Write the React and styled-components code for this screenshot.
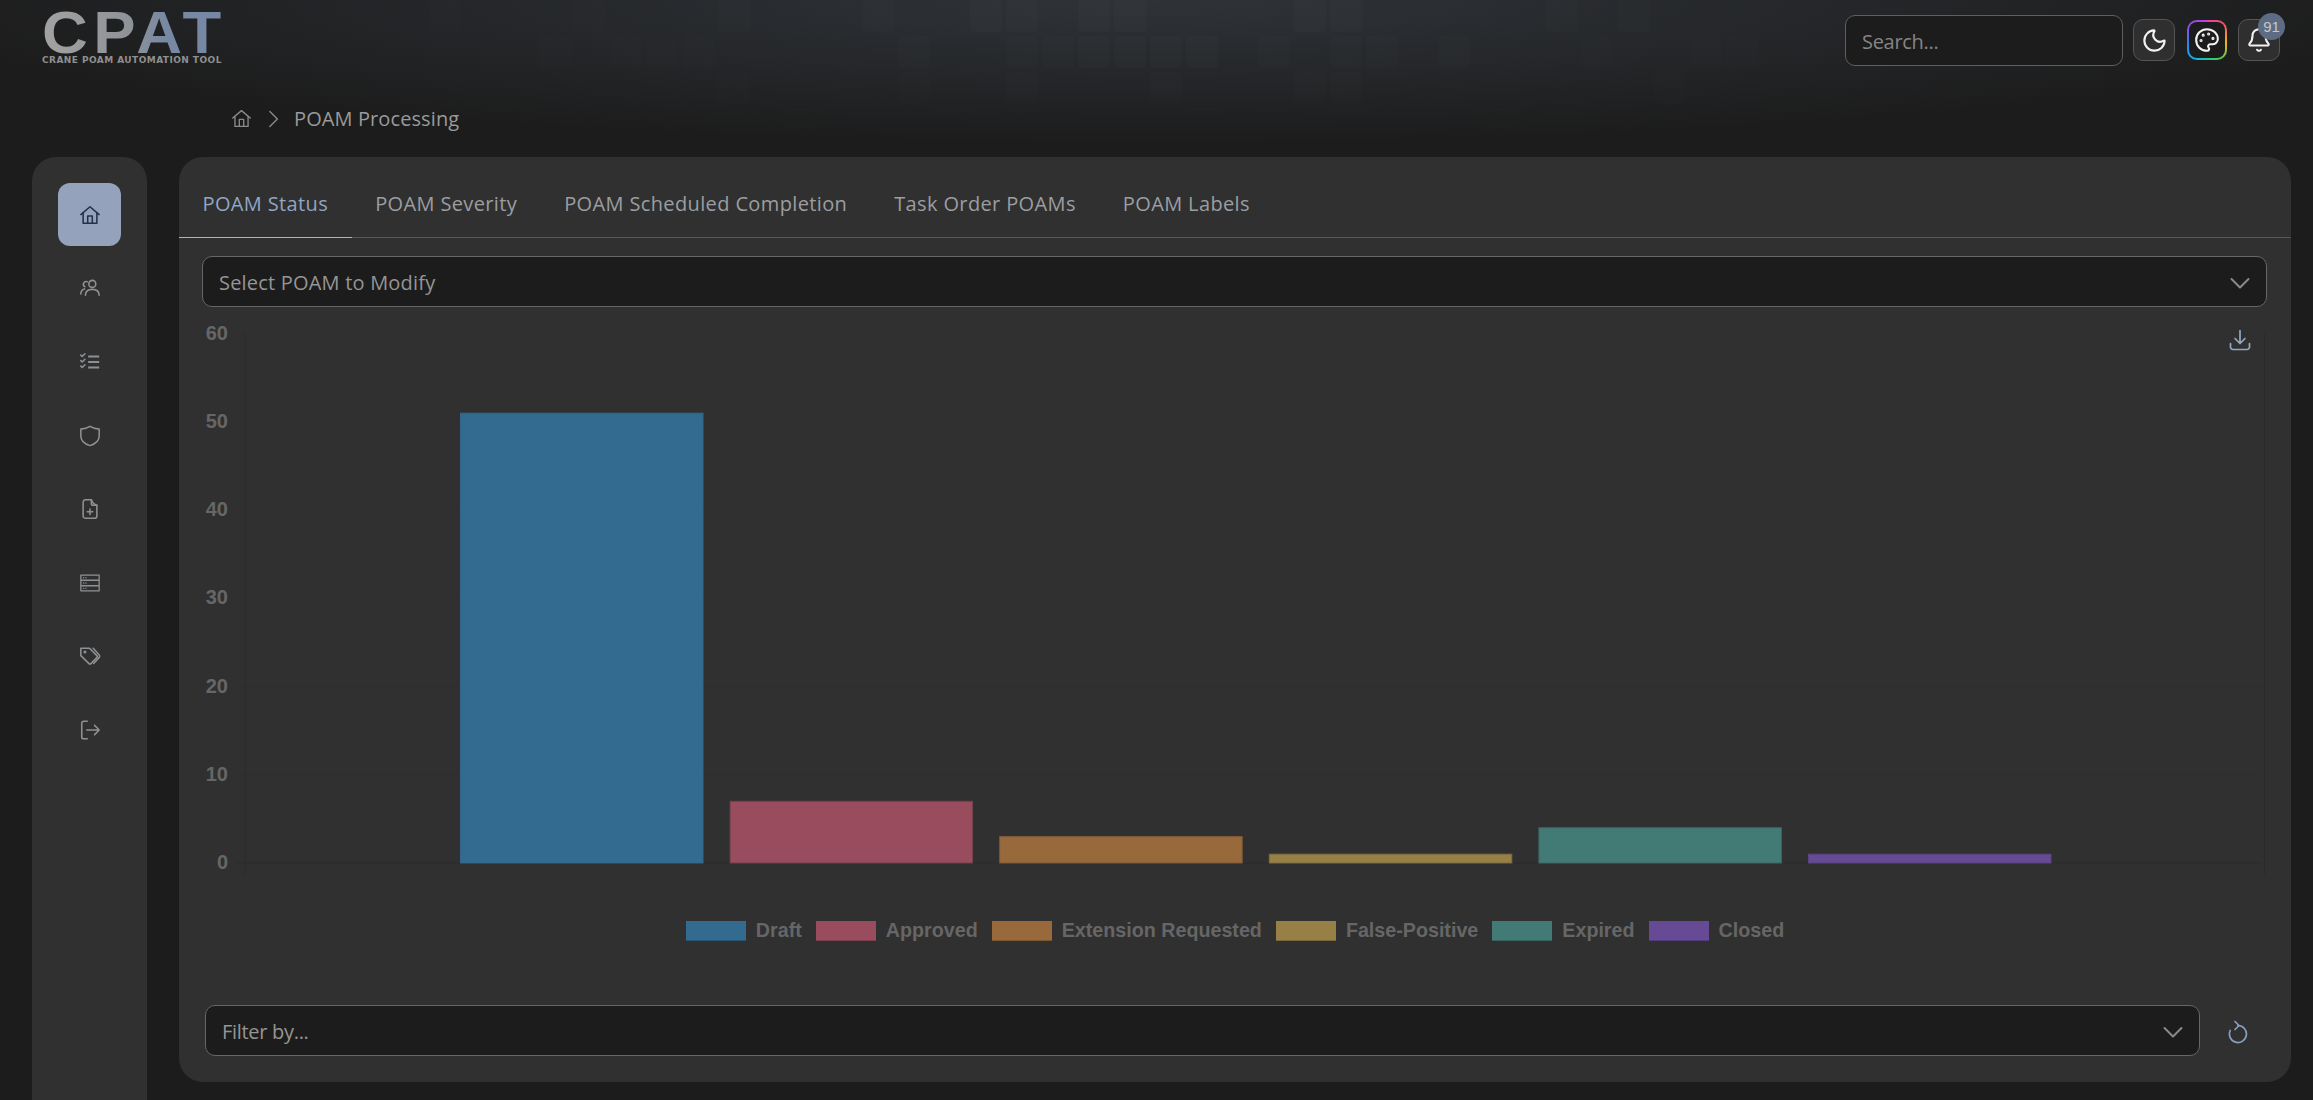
import React from "react";
import styled, { createGlobalStyle } from "styled-components";
import { Moon, Palette, Bell } from "lucide-react";

const Global = createGlobalStyle`
  html, body {
    margin: 0;
    background: #1c1c1c;
    font-family: "Open Sans", "Noto Sans", sans-serif;
  }
  * { box-sizing: border-box; }
`;

const Page = styled.div`
  position: relative;
  width: 2313px;
  height: 1100px;
  overflow: hidden;
  background: radial-gradient(ellipse 1300px 145px at 1150px 0, #2f3338 0%, #25272a 50%, #1c1c1c 100%), #1c1c1c;
`;

const Backdrop = styled.div`
  position: absolute;
  top: 0;
  left: -2px;
  display: grid;
  grid-template-columns: repeat(65, 32px);
  grid-auto-rows: 32px;
  gap: 4px;
  mask-image: linear-gradient(to bottom, #000 40%, rgba(0, 0, 0, 0.35) 100%);
`;

const Cell = styled.div`
  border-radius: 3px;
  background: #ffffff;
`;

const Content = styled.div`
  position: relative;
  z-index: 1;
`;

const Header = styled.header`
  display: flex;
  align-items: center;
  justify-content: space-between;
  height: 80px;
  padding: 0 33px 0 42px;
`;

const Logo = styled.div`
  display: flex;
  flex-direction: column;
  width: 180px;
  margin-top: -5px;
`;

const LogoWord = styled.div`
  font-family: "Liberation Sans", sans-serif;
  font-weight: 700;
  font-size: 59px;
  line-height: 45px;
  height: 45px;
  letter-spacing: 5px;
  white-space: nowrap;
  transform: scaleX(1.075);
  transform-origin: left center;
  color: transparent;
  background: linear-gradient(90deg, #a2a2a2 0%, #8f9298 45%, #7688a3 65%, #7688a3 100%);
  background-clip: text;
  -webkit-background-clip: text;
`;

const LogoTag = styled.div`
  font-family: "DejaVu Sans", sans-serif;
  font-weight: 700;
  font-size: 9px;
  line-height: 9px;
  letter-spacing: 0.44px;
  white-space: nowrap;
  color: #8f8f8f;
`;

const Actions = styled.div`
  display: flex;
  align-items: center;
`;

const SearchBox = styled.input`
  width: 278px;
  height: 51px;
  padding: 2px 16px 0;
  margin-right: 10px;
  font: 400 20px "Open Sans", sans-serif;
  letter-spacing: -0.3px;
  color: #ccc;
  background: #1c1c1c;
  border: 1px solid #5f5f5f;
  border-radius: 10px;
  outline: none;
  &::placeholder { color: #858585; opacity: 1; }
`;

const IconButton = styled.button`
  position: relative;
  display: flex;
  align-items: center;
  justify-content: center;
  width: 42px;
  height: 42px;
  padding: 0;
  color: #f2f2f2;
  background: #2f2f2f;
  border: 1px solid #555;
  border-radius: 10px;
`;

const ThemeButton = styled(IconButton)`
  width: 40px;
  height: 40px;
  margin: 0 11px 0 12px;
  border: 2px solid transparent;
  background:
    linear-gradient(#1c1c1c, #1c1c1c) padding-box,
    conic-gradient(from 0deg, #e83fa8, #f0506a 12%, #f2b21e 27%, #38d05c 42%, #18b0f0 60%, #2f7ff0 72%, #8a4fe8 85%, #c040e0 100%) border-box;
`;

const Badge = styled.span`
  position: absolute;
  top: -7px;
  right: -6px;
  width: 27px;
  height: 27px;
  border-radius: 50%;
  font-size: 15px;
  line-height: 27px;
  text-align: center;
  color: #c3c7cb;
  background: #5d6c82;
`;

const Crumbs = styled.nav`
  display: flex;
  align-items: center;
  height: 77px;
  padding-left: 231px;
  color: #8c8c8c;
`;

const CrumbText = styled.span`
  margin-left: 10px;
  font-size: 20px;
  letter-spacing: 0.1px;
  color: #9a9a9a;
`;

const CrumbSep = styled.span`
  display: flex;
  margin-left: 12px;
`;

const Body = styled.div`
  display: flex;
  align-items: flex-start;
  gap: 32px;
  padding: 0 22px 0 32px;
`;

const Sidebar = styled.aside`
  flex: none;
  display: flex;
  flex-direction: column;
  align-items: center;
  gap: 10.7px;
  width: 115px;
  height: 980px;
  padding-top: 26px;
  background: #303030;
  border-radius: 24px;
`;

const NavItem = styled.a`
  display: flex;
  align-items: center;
  justify-content: center;
  width: 63px;
  height: 63px;
  border-radius: 12px;
  color: ${p => (p.$active ? "#27304a" : "#8e9194")};
  background: ${p => (p.$active ? "#94a3bb" : "transparent")};
`;

const Panel = styled.main`
  flex: 1;
  height: 925px;
  background: #303030;
  border-radius: 24px;
`;

const TabBar = styled.div`
  display: flex;
  height: 81px;
  border-bottom: 1px solid #575757;
`;

const Tab = styled.div`
  display: flex;
  align-items: center;
  height: 81px;
  padding: 12px 23.5px 0;
  font-size: 20px;
  font-weight: 500;
  letter-spacing: 0.37px;
  white-space: nowrap;
  color: ${p => (p.$active ? "#91a5c4" : "#9b9ea1")};
  border-bottom: 1px solid ${p => (p.$active ? "#a4b4cc" : "transparent")};
`;

const Picker = styled.div`
  flex: 1;
  display: flex;
  align-items: center;
  justify-content: space-between;
  height: 51px;
  font-size: 20px;
  letter-spacing: ${p => p.$spacing || 0}px;
  color: #959595;
  background: #1c1c1c;
  border: 1px solid #666;
  border-radius: 10px;
  padding: 2px 14px 0 16px;
`;

const PickerRow = styled.div`
  display: flex;
  align-items: center;
  margin: 18px 24px 0 23px;
`;

const ChartWrap = styled.div`
  position: relative;
  height: 570px;
  margin: 13px 24px 0 23px;
`;

const ChartSvg = styled.svg`
  display: block;
  width: 100%;
  height: 100%;
`;

const AxisLabel = styled.text`
  font-family: "Liberation Sans", sans-serif;
  font-weight: 700;
  font-size: 20px;
  fill: #666;
  text-anchor: end;
  dominant-baseline: central;
`;

const Download = styled.div`
  position: absolute;
  top: 8px;
  right: 15px;
  display: flex;
  color: #93a7c4;
`;

const Legend = styled.div`
  display: flex;
  justify-content: center;
  gap: 14px;
  height: 20px;
  margin-top: 31px;
`;

const LegendItem = styled.div`
  display: flex;
  align-items: center;
  gap: 10px;
  font-family: "Liberation Sans", sans-serif;
  font-weight: 700;
  font-size: 19.7px;
  line-height: 18px;
  color: #666;
`;

const LegendLabel = styled.span`
  margin-bottom: 2px;
`;

const Swatch = styled.span`
  width: 60px;
  height: 20px;
  background: ${p => p.$color};
  border-bottom: 1px solid rgba(0, 0, 0, 0.18);
`;

const FilterRow = styled.div`
  display: flex;
  align-items: center;
  margin: 64px 0 0 26px;
`;

const RefreshSlot = styled.div`
  flex: none;
  display: flex;
  justify-content: center;
  width: 91px;
  padding-right: 15px;
  margin-top: 3px;
  color: #86a0c0;
`;

const Glyph = styled.svg`
  flex: none;
  width: ${p => p.$size || 22}px;
  height: ${p => p.$size || 22}px;
  fill: none;
  stroke: currentColor;
  stroke-width: ${p => p.$weight || 1.7};
  stroke-linecap: round;
  stroke-linejoin: round;
`;

const ChevronColor = styled.span`
  display: flex;
  color: #8a8a8a;
`;

const Icon = ({ size, weight, children }) => (
  <Glyph viewBox="0 0 24 24" $size={size} $weight={weight}>{children}</Glyph>
);

const HomeIcon = props => (
  <Icon {...props}>
    <path d="M2 11.500 12 3l10 8.500" />
    <path d="M4.500 9.500V21h15V9.500" />
    <path d="M9.500 21v-8h5v8" />
  </Icon>
);
const UsersIcon = () => (
  <Icon>
    <circle cx="14.500" cy="7.500" r="3.800" />
    <path d="M7 20c0-4 3-6.500 7.500-6.500S22 16 22 20" />
    <path d="M9 5.200a3 3 0 0 0-2.600 5.400" />
    <path d="M6 13c-2.500.6-4 2.800-4 5.500" />
  </Icon>
);
const ChecksIcon = () => (
  <Icon>
    <path d="M10 6h12M10 12h12M10 18h12" strokeWidth="2" strokeLinecap="butt" />
    <path d="M2 4.500l1.500 1.500L6.500 3M2 10.500l1.500 1.500 3-3M2 16.500 3.500 18l3-3" />
  </Icon>
);
const ShieldIcon = () => (
  <Icon>
    <path d="M12 1.500c3 1.900 6 2.800 10 3V12c0 5-4.500 8.800-10 10.500C6.500 20.800 2 17 2 12V4.500c4-.2 7-1.100 10-3z" />
  </Icon>
);
const FilePlusIcon = () => (
  <Icon>
    <path d="M4.500 4.500a2.500 2.500 0 0 1 2.500-2.500h6.500c1 3 3 5 6 6v11.500a2.500 2.500 0 0 1-2.500 2.500H7a2.500 2.500 0 0 1-2.500-2.500z" />
    <path d="M13.500 2v4a2 2 0 0 0 2 2h4" />
    <path d="M12 12v6M9 15h6" />
  </Icon>
);
const ServerIcon = () => (
  <Icon weight={1.4}>
    <path d="M2 3.500h20v5.500H2zM2 9h20v6H2zM2 15h20v5.500H2z" />
    <path d="M4.500 6.200h4M4.500 12h4M4.500 17.800h4" strokeDasharray="1.200 1.300" strokeLinecap="butt" />
  </Icon>
);
const TagsIcon = () => (
  <Icon>
    <path d="M2 2.500h9.500l8 8a1.500 1.500 0 0 1 0 2.100L13 19.200a1.500 1.500 0 0 1-2.100 0L2 10.500z" />
    <path d="M15.500 2.500l6.300 7a2.500 2.500 0 0 1 0 3.200L16 19" />
    <circle cx="6.500" cy="6.500" r=".8" />
  </Icon>
);
const LogoutIcon = () => (
  <Icon>
    <path d="M9 2.500H5a2 2 0 0 0-2 2v15a2 2 0 0 0 2 2h4" />
    <path d="M8.500 12H22M17 7l5 5-5 5" />
  </Icon>
);
const ChevronDown = () => (
  <Icon size={24} weight={2}>
    <path d="M3.500 8l8.500 8.500L20.500 8" />
  </Icon>
);
const ChevronRight = () => (
  <Icon size={20} weight={1.6}>
    <path d="M7 3l9 9-9 9" />
  </Icon>
);
const DownloadIcon = () => (
  <Icon size={24} weight={1.7}>
    <path d="M12 2.500V15M7 10.500l5 5 5-5" />
    <path d="M2.500 15.500v3.500a2.500 2.500 0 0 0 2.500 2.500h14a2.500 2.500 0 0 0 2.500-2.500v-3.500" />
  </Icon>
);
const RefreshIcon = () => (
  <Icon size={24} weight={1.7}>
    <path d="M12 5.500a8.500 8.500 0 1 1-7.800 5" />
    <path d="M9 1.500l4 4-4 4" />
  </Icon>
);

const TABS = ["POAM Status", "POAM Severity", "POAM Scheduled Completion", "Task Order POAMs", "POAM Labels"];

const NAV = [HomeIcon, UsersIcon, ChecksIcon, ShieldIcon, FilePlusIcon, ServerIcon, TagsIcon, LogoutIcon];

const STATUS = [
  { label: "Draft", value: 51, color: "#336a90", edge: "#34648a" },
  { label: "Approved", value: 7, color: "#994c5e", edge: "#70414c" },
  { label: "Extension Requested", value: 3, color: "#98693b", edge: "#7c5a38" },
  { label: "False-Positive", value: 1, color: "#968046", edge: "#7c6c42" },
  { label: "Expired", value: 4, color: "#427a76", edge: "#3c6664" },
  { label: "Closed", value: 1, color: "#664a96", edge: "#584480" },
];

// page coordinates of the plot, used as the svg viewBox
const PLOT = { left: 245, right: 2262, zero: 863, unit: 8.82 };

const cells = Array.from({ length: 65 * 5 }, (_, i) => {
  const col = i % 65;
  const row = Math.floor(i / 65);
  const noise = Math.abs(Math.sin(i * 12.9898) * 43758.5453) % 1;
  const zone = Math.max(0, 1 - Math.abs(col - 32) / 30);
  const fade = (1 - row / 6) * zone;
  return noise > 0.72 ? 0.018 * fade : 0.007 * fade * noise;
});

const StatusChart = () => (
  <ChartSvg viewBox="202 320 2065 570" preserveAspectRatio="none">
    {[0, 10, 20, 30, 40, 50, 60].map(tick => {
      const y = PLOT.zero - tick * PLOT.unit;
      return (
        <g key={tick}>
          <line x1="237" x2={PLOT.right} y1={y} y2={y} stroke={tick === 0 ? "#2a2a2a" : "#2f2f2f"} />
          <AxisLabel x="228" y={y - 1}>{tick}</AxisLabel>
        </g>
      );
    })}
    <line x1={PLOT.left} x2={PLOT.left} y1="333" y2="875" stroke="#2a2a2a" />
    <line x1={2264.5} x2={2264.5} y1="333" y2="875" stroke="#2b2b2b" />
    {STATUS.map((s, i) => (
      <rect
        key={s.label}
        x={460.5 + i * 269.6}
        y={PLOT.zero - s.value * PLOT.unit}
        width="242.500"
        height={s.value * PLOT.unit}
        fill={s.color}
        stroke={s.edge}
      />
    ))}
  </ChartSvg>
);

export default function App() {
  return (
    <>
      <Global />
      <Page>
        <Backdrop aria-hidden="true">
          {cells.map((alpha, i) => <Cell key={i} style={{ opacity: alpha }} />)}
        </Backdrop>
        <Content>
          <Header>
            <Logo>
              <LogoWord>CPAT</LogoWord>
              <LogoTag>CRANE POAM AUTOMATION TOOL</LogoTag>
            </Logo>
            <Actions>
              <SearchBox placeholder="Search..." />
              <IconButton><Moon size={27} strokeWidth={1.9} /></IconButton>
              <ThemeButton><Palette size={26} strokeWidth={1.9} /></ThemeButton>
              <IconButton>
                <Bell size={26} strokeWidth={1.9} />
                <Badge>91</Badge>
              </IconButton>
            </Actions>
          </Header>
          <Crumbs>
            <HomeIcon size={21} weight={1.5} />
            <CrumbSep><ChevronRight /></CrumbSep>
            <CrumbText>POAM Processing</CrumbText>
          </Crumbs>
          <Body>
            <Sidebar>
              {NAV.map((Item, i) => (
                <NavItem key={i} $active={i === 0}><Item /></NavItem>
              ))}
            </Sidebar>
            <Panel>
              <TabBar>
                {TABS.map((t, i) => <Tab key={t} $active={i === 0}>{t}</Tab>)}
              </TabBar>
              <PickerRow>
                <Picker $spacing={0.2}>
                  Select POAM to Modify
                  <ChevronColor><ChevronDown /></ChevronColor>
                </Picker>
              </PickerRow>
              <ChartWrap>
                <StatusChart />
                <Download><DownloadIcon /></Download>
              </ChartWrap>
              <Legend>
                {STATUS.map(s => (
                  <LegendItem key={s.label}>
                    <Swatch $color={s.color} />
                    <LegendLabel>{s.label}</LegendLabel>
                  </LegendItem>
                ))}
              </Legend>
              <FilterRow>
                <Picker $spacing={-0.3}>
                  Filter by...
                  <ChevronColor><ChevronDown /></ChevronColor>
                </Picker>
                <RefreshSlot><RefreshIcon /></RefreshSlot>
              </FilterRow>
            </Panel>
          </Body>
        </Content>
      </Page>
    </>
  );
}
